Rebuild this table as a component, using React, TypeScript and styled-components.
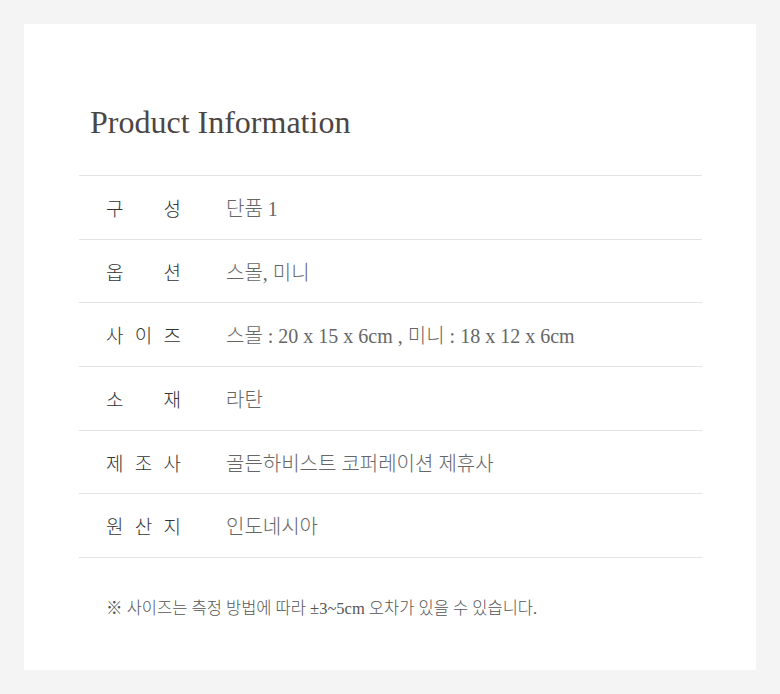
import styled, { createGlobalStyle } from "styled-components";

type InfoRowType = {
  label: string;
  value: string;
};

const rows: Array<InfoRowType> = [
  { label: "구성", value: "단품 1" },
  { label: "옵션", value: "스몰, 미니" },
  { label: "사이즈", value: "스몰 : 20 x 15 x 6cm , 미니 : 18 x 12 x 6cm" },
  { label: "소재", value: "라탄" },
  { label: "제조사", value: "골든하비스트 코퍼레이션 제휴사" },
  { label: "원산지", value: "인도네시아" },
];

const App = () => {
  return (
    <>
      <GlobalStyle />
      <Page>
        <Card>
          <Title>Product Information</Title>
          <InfoTable>
            {rows.map((row, index) => {
              return (
                <Row key={index}>
                  <Label>
                    {row.label.split("").map((ch, i) => (
                      <span key={i}>{ch}</span>
                    ))}
                  </Label>
                  <Value>{row.value}</Value>
                </Row>
              );
            })}
          </InfoTable>
          <Note>※ 사이즈는 측정 방법에 따라 ±3~5cm 오차가 있을 수 있습니다.</Note>
        </Card>
      </Page>
    </>
  );
};

export default App;

const GlobalStyle = createGlobalStyle`
  * {
    box-sizing: border-box;
  }
  body {
    margin: 0;
    background: #f4f4f4;
    font-family: "Liberation Serif", "Noto Sans CJK KR", serif;
  }
`;

const Page = styled.div`
  padding: 24px;
`;

const Card = styled.section`
  width: 732px;
  height: 646px;
  background: #ffffff;
  padding: 82px 54px 0 55px;
`;

const Title = styled.h2`
  margin: 0 0 37px 11px;
  font-weight: 400;
  font-size: 32px;
  line-height: 1;
  color: #4b4644;
`;

const InfoTable = styled.div`
  display: flex;
  flex-direction: column;
  border-bottom: 1px solid #e3e3e3;
`;

const Row = styled.div`
  display: flex;
  align-items: center;
  height: 63.7px;
  padding-left: 27px;
  border-top: 1px solid #e3e3e3;
`;

const Label = styled.div`
  display: flex;
  justify-content: space-between;
  width: 75px;
  margin-right: 45px;
  font-size: 19px;
  font-weight: 300;
  color: #333333;
`;

const Value = styled.div`
  font-size: 20px;
  font-weight: 300;
  color: #666666;
`;

const Note = styled.p`
  margin: 37px 0 0 27px;
  font-size: 16.5px;
  font-weight: 300;
  color: #555555;
`;
